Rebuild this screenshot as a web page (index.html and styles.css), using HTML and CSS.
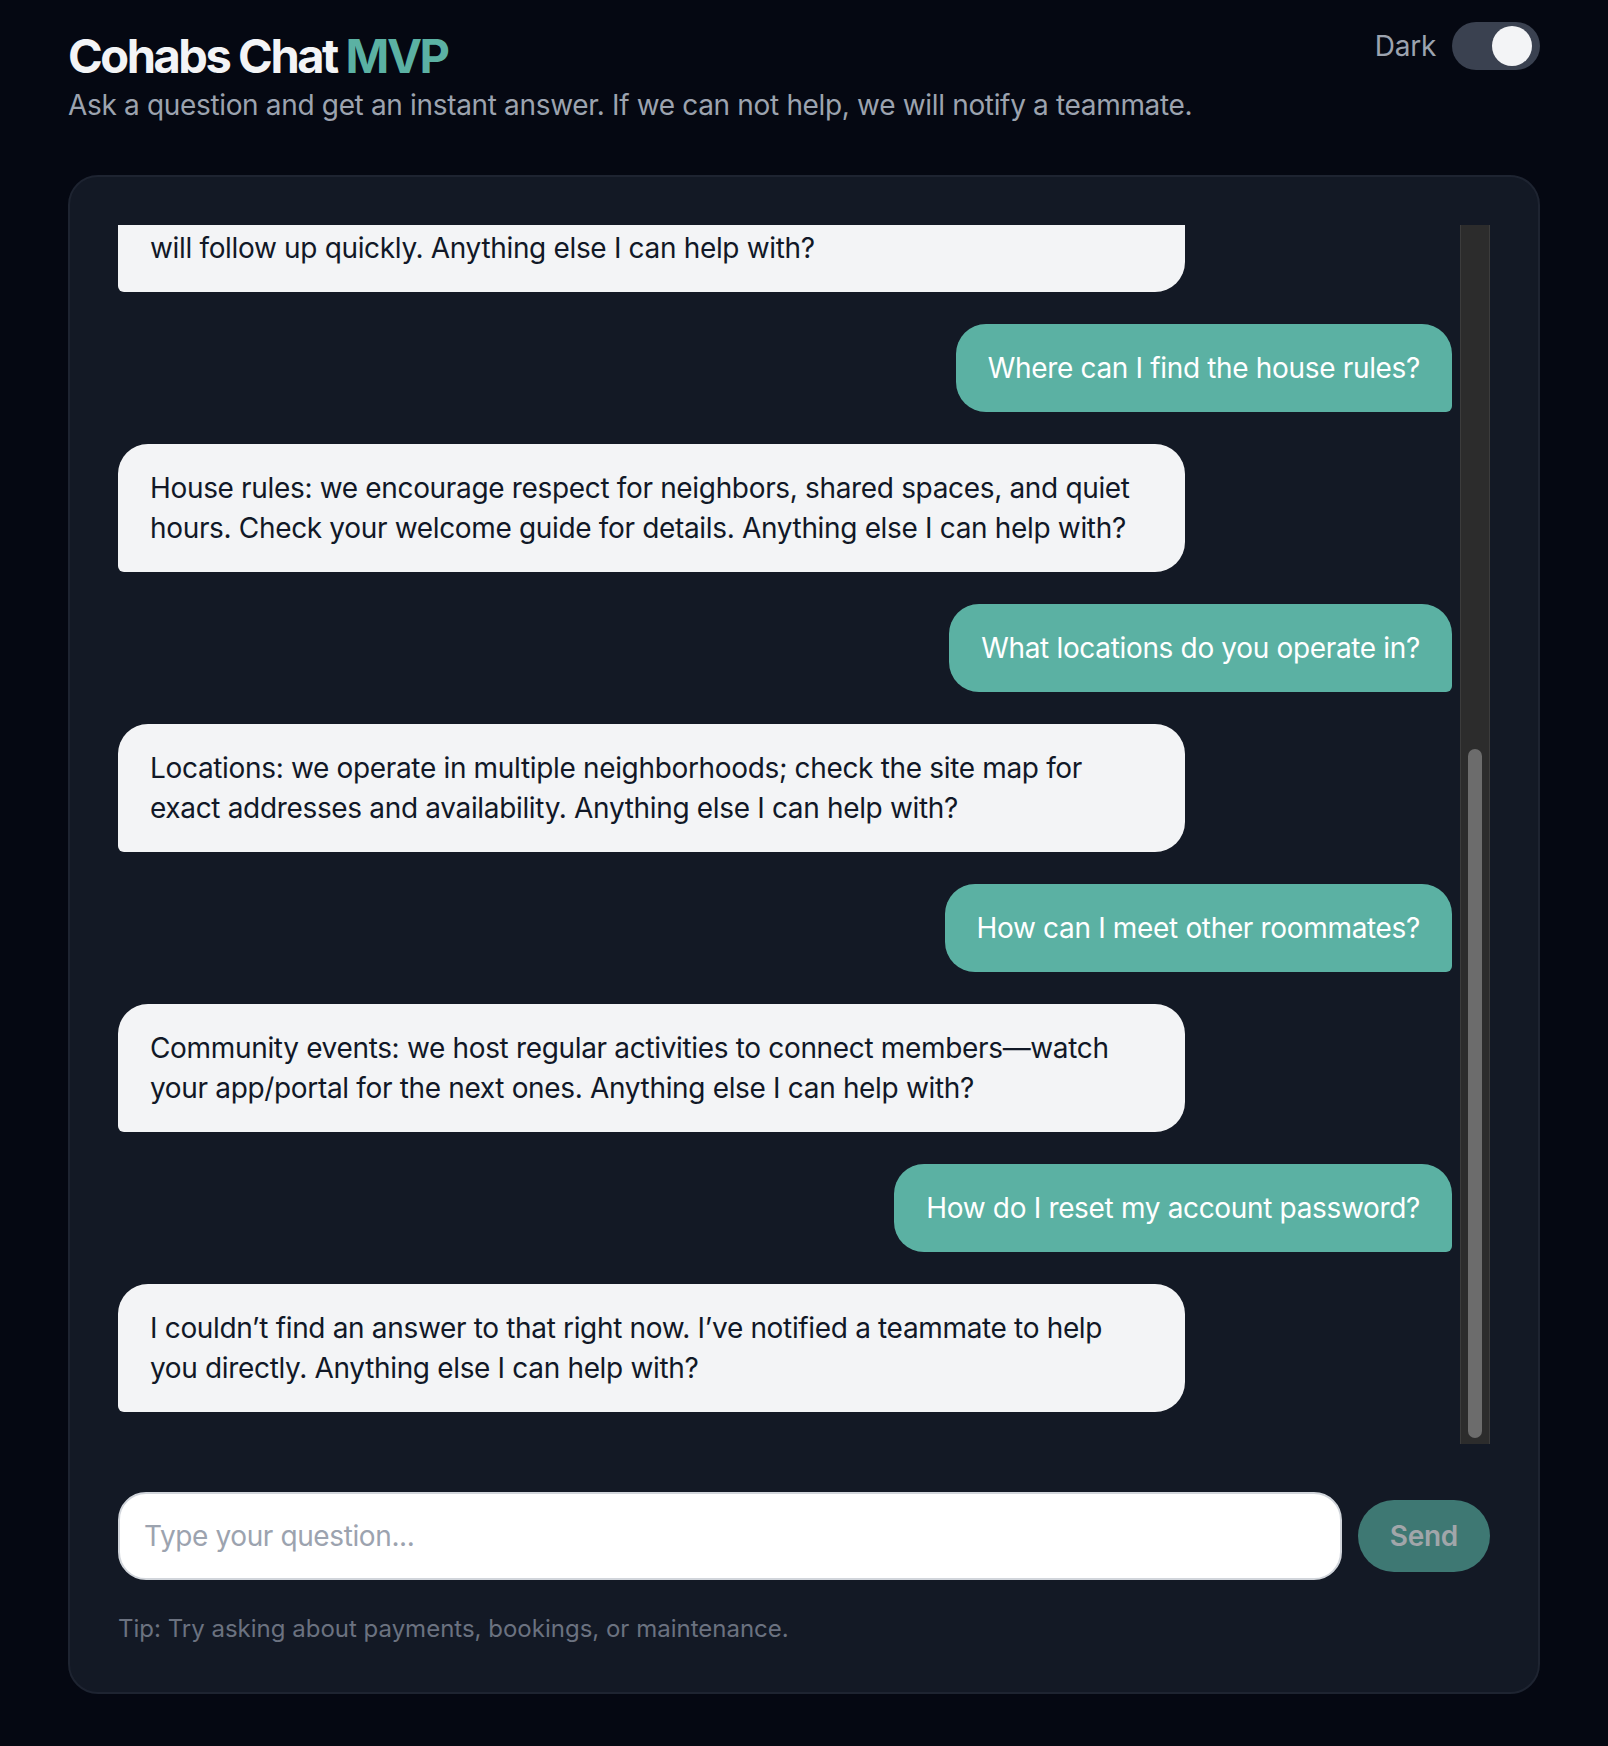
FILE: index.html
```html
<!DOCTYPE html>
<html lang="en">
<head>
<meta charset="utf-8">
<title>Cohabs Chat MVP</title>
<link rel="stylesheet" href="styles.css">
</head>
<body>
<div class="page">
  <header class="header">
    <div class="intro">
      <h1 class="title">Cohabs Chat <span class="accent">MVP</span></h1>
      <p class="subtitle">Ask a question and get an instant answer. If we can not help, we will notify a teammate.</p>
    </div>
    <div class="theme">
      <span class="theme-label">Dark</span>
      <span class="switch"><span class="knob"></span></span>
    </div>
  </header>

  <main class="card">
    <div class="chat">
      <div class="scroll">
        <div class="thread">
          <div class="msg bot">Hi! I’m the Cohabs assistant. Ask me anything about payments, bookings, maintenance, house rules, or life in the house.</div>
          <div class="msg user">How do I pay my rent?</div>
          <div class="msg bot">Payments: rent is charged automatically each month to the card saved in your account. Anything else I can help with?</div>
          <div class="msg user">Can I book the guest room?</div>
          <div class="msg bot">Bookings: you can reserve shared spaces and guest rooms directly from the app. Anything else I can help with?</div>
          <div class="msg user">The heating in my room is broken.</div>
          <div class="msg bot">Maintenance: thanks for reporting this. I’ve opened a ticket and a member of our team<br>will follow up quickly. Anything else I can help with?</div>
          <div class="msg user">Where can I find the house rules?</div>
          <div class="msg bot">House rules: we encourage respect for neighbors, shared spaces, and quiet hours. Check your welcome guide for details. Anything else I can help with?</div>
          <div class="msg user">What locations do you operate in?</div>
          <div class="msg bot">Locations: we operate in multiple neighborhoods; check the site map for exact addresses and availability. Anything else I can help with?</div>
          <div class="msg user">How can I meet other roommates?</div>
          <div class="msg bot">Community events: we host regular activities to connect members—watch your app/portal for the next ones. Anything else I can help with?</div>
          <div class="msg user">How do I reset my account password?</div>
          <div class="msg bot">I couldn’t find an answer to that right now. I’ve notified a teammate to help you directly. Anything else I can help with?</div>
        </div>
      </div>
      <div class="scrollbar" aria-hidden="true"><div class="thumb"></div></div>
    </div>

    <form class="composer">
      <input class="field" type="text" placeholder="Type your question...">
      <button class="send" type="button" disabled>Send</button>
    </form>

    <p class="tip">Tip: Try asking about payments, bookings, or maintenance.</p>
  </main>
</div>
</body>
</html>
```

FILE: styles.css
```css
* {
  box-sizing: border-box;
}

html, body {
  margin: 0;
  padding: 0;
  background: #050812;
}

body {
  font-family: Inter, "Noto Sans", "Liberation Sans", sans-serif;
  color: #f3f4f6;
  letter-spacing: -0.021em;
}

.page {
  padding: 22px 68px 0;
}

.header {
  display: flex;
  justify-content: space-between;
  align-items: flex-start;
}

.intro {
  display: flex;
  flex-direction: column;
}

.title {
  margin: 5px 0 0;
  font-size: 47px;
  line-height: 57px;
  font-weight: 700;
  letter-spacing: -0.052em;
  color: #f3f4f6;
}

.accent {
  color: #5bb1a3;
}

.subtitle {
  margin: 0;
  font-size: 28px;
  line-height: 42px;
  color: #9ca3af;
}

.theme {
  display: flex;
  align-items: center;
  gap: 16px;
  height: 48px;
}

.theme-label {
  font-size: 28px;
  letter-spacing: -0.01em;
  color: #9ca3af;
}

.switch {
  display: flex;
  justify-content: flex-end;
  align-items: center;
  width: 88px;
  height: 48px;
  padding: 4px 8px;
  border-radius: 24px;
  background: #3a4150;
}

.knob {
  width: 40px;
  height: 40px;
  border-radius: 50%;
  background: #f3f4f6;
}

.card {
  margin-top: 49px;
  border: 2px solid #1e2431;
  border-radius: 30px;
  background: #131925;
  padding: 48px 48px 45px;
}

.chat {
  display: grid;
  grid-template-columns: 1fr 30px;
  height: 1219px;
}

.scroll {
  overflow-y: auto;
  scrollbar-width: none;
  display: flex;
  flex-direction: column-reverse;
  min-height: 0;
}

.scroll::-webkit-scrollbar {
  display: none;
}

.scrollbar {
  display: flex;
  flex-direction: column;
  justify-content: flex-end;
  padding: 0 7px 6px;
  background: #2c2c2c;
  border-left: 1px solid #3c3c3c;
  border-right: 1px solid #3c3c3c;
}

.thumb {
  height: 689px;
  border-radius: 8px;
  background: #6c6c6c;
}

.thread {
  display: flex;
  flex-direction: column;
  gap: 32px;
  padding: 0 8px 32px 0;
}

.msg {
  max-width: 80%;
  padding: 24px 32px;
  font-size: 28px;
  line-height: 40px;
}

.bot {
  align-self: flex-start;
  width: 80%;
  background: #f3f4f6;
  color: #111827;
  border-radius: 30px 30px 30px 6px;
}

.user {
  align-self: flex-end;
  background: #5bb1a3;
  color: #ffffff;
  border-radius: 30px 30px 6px 30px;
}

.composer {
  display: flex;
  align-items: center;
  gap: 16px;
  margin: 48px 0 0;
}

.field {
  flex: 1;
  height: 88px;
  border: 2px solid #d1d5db;
  border-radius: 28px;
  background: #ffffff;
  padding: 0 24px;
  font-family: inherit;
  font-size: 28px;
  letter-spacing: -0.014em;
  color: #111827;
  outline: none;
}

.field::placeholder {
  color: #9ca3af;
}

.send {
  height: 72px;
  padding: 0 32px;
  border: 0;
  border-radius: 36px;
  background: #3e7873;
  color: #a1a6aa;
  font-family: inherit;
  font-size: 28px;
  font-weight: 600;
  letter-spacing: -0.01em;
}

.tip {
  margin: 31px 0 0;
  font-size: 24px;
  line-height: 36px;
  letter-spacing: 0;
  color: #6b7280;
}
```
